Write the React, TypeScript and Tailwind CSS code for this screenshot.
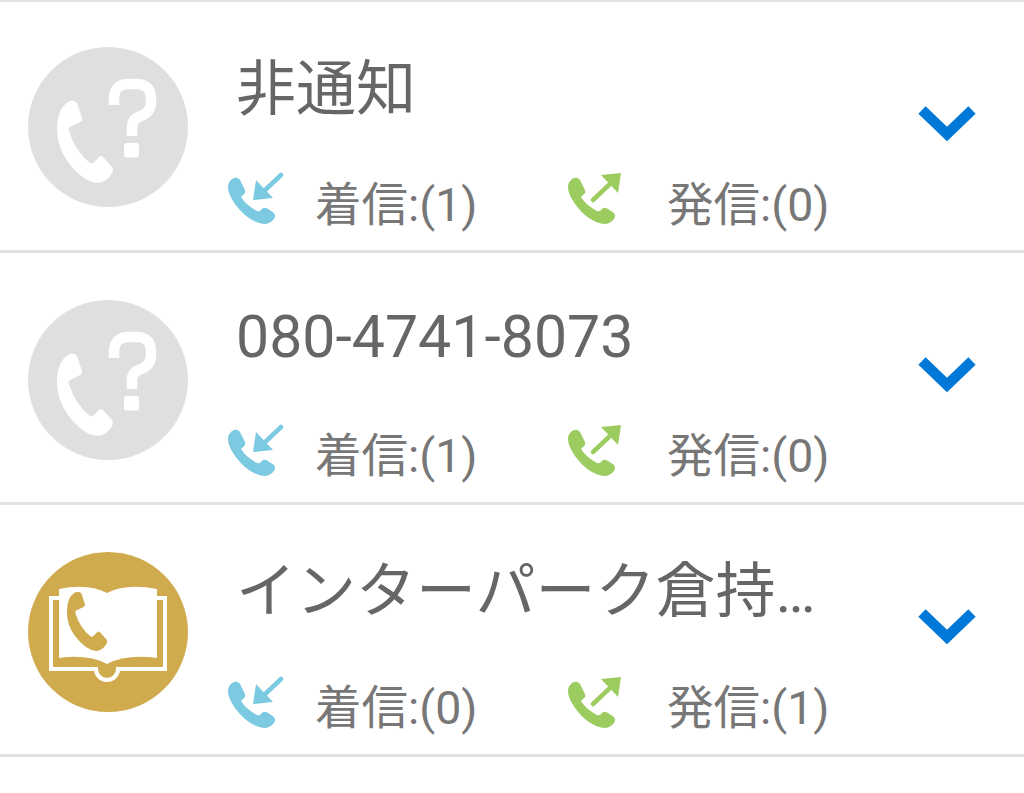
const PHONE = "M40 55 Q46 52 49 56 L54 71 Q55 74 52 75 L42 80 Q40 81 41 84 Q47 104 62 116 Q64 117 66 115 L71 110 Q73 108 75 110 L84 120 Q86 123 84 126 Q79 135 70 136 Q55 135 40 115 Q29 100 29 82 Q29 62 40 55Z";
const SMALL = "M4 9 Q9 6 12 10 L17 20 Q18 23 15 25 L13 27 Q18 35 29 41 Q31 42 33 40 L35 38 Q37 37 40 39 L46 43 Q48 46 46 49 Q42 54 36 54 Q20 52 7 34 Q0 24 0 17 Q0 12 4 9Z";

function Unknown() {
  return (
    <svg width="160" height="160" viewBox="0 0 160 160" className="shrink-0">
      <circle cx="80" cy="80" r="80" fill="#dfdfdf" />
      <path d={PHONE} fill="#fff" />
      <path d="M86 58 V52 Q86 37 101 37 H108 Q123 37 123 52 V55 Q123 65 113 69 Q104 72 104 80 V89" fill="none" stroke="#fff" strokeWidth="10.5" />
      <rect x="96" y="96" width="15" height="14.5" rx="2.5" fill="#fff" />
    </svg>
  );
}

function Book() {
  return (
    <svg width="160" height="160" viewBox="0 0 160 160" className="shrink-0">
      <circle cx="80" cy="80" r="80" fill="#d0ab4e" />
      <path d="M31 46 H23 V117 H68 A11 11 0 0 0 90 117 H137 V46 H129" fill="none" stroke="#fff" strokeWidth="4" />
      <path d="M31 37 Q60 31 79 41 Q98 31 129 37 V106 Q98 102 79 112 Q60 102 31 106Z" fill="#fff" />
      <path d={PHONE} fill="#d0ab4e" transform="translate(18 1) scale(0.72)" />
    </svg>
  );
}

function CallIn() {
  return (
    <svg width="56" height="56" viewBox="0 0 56 56" className="shrink-0">
      <path d={SMALL} fill="#7bcae1" />
      <path d="M53 5 L33 24" stroke="#7bcae1" strokeWidth="4.5" strokeLinecap="round" />
      <path d="M25 30 L28 10 L45 28Z" fill="#7bcae1" />
    </svg>
  );
}

function CallOut() {
  return (
    <svg width="56" height="56" viewBox="0 0 56 56" className="shrink-0">
      <path d={SMALL} fill="#9ccc5f" />
      <path d="M25 30 L43 13" stroke="#9ccc5f" strokeWidth="4.5" strokeLinecap="round" />
      <path d="M53 3 L33 5 L50 23Z" fill="#9ccc5f" />
    </svg>
  );
}

function Chevron() {
  return (
    <svg width="58" height="36" viewBox="0 0 58 36" className="shrink-0">
      <path d="M4 4 L29 28 L54 4" fill="none" stroke="#0078d7" strokeWidth="10.5" />
    </svg>
  );
}

const rows = [
  { title: "非通知", inc: 1, out: 0, book: false, h: "h-[251px]", top: "mt-[45px]", fs: "text-[60px]", tt: "mt-[46px]", st: "mt-[38px]", sub: "mt-[14px]" },
  { title: "080-4741-8073", inc: 1, out: 0, book: false, h: "h-[252px]", top: "mt-[47px]", fs: "text-[59px]", tt: "mt-[42px]", st: "mt-[43px]", sub: "mt-[12px]" },
  { title: "インターパーク倉持…", inc: 0, out: 1, book: true, h: "h-[252px]", top: "mt-[47px]", fs: "text-[60px]", tt: "mt-[45px]", st: "mt-[40px]", sub: "mt-[12px]" },
];

export default function App() {
  return (
    <div className="w-[1024px] h-[793px] bg-white overflow-hidden border-t-2 border-[#e2e2e2] [font-family:Roboto,'Noto_Sans_CJK_JP',sans-serif]">
      {rows.map((r) => (
        <div key={r.title} className={`${r.h} border-b-[3px] border-[#e2e2e2] flex items-start pl-7`}>
          <div className={r.top}>{r.book ? <Book /> : <Unknown />}</div>
          <div className="ml-10 w-[690px] flex flex-col">
            <div className={`${r.tt} ${r.fs} h-[84px] pl-2 whitespace-nowrap leading-[84px] text-[#666666]`}>{r.title}</div>
            <div className={`${r.st} flex items-center h-[56px]`}>
              <div className="w-[340px] flex items-center">
                <CallIn />
                <span className={`${r.sub} ml-[31px] text-[46.5px] leading-[56px] text-[#777777]`}>着信:({r.inc})</span>
              </div>
              <div className="flex items-center">
                <CallOut />
                <span className={`${r.sub} ml-[43px] text-[46.5px] leading-[56px] text-[#777777]`}>発信:({r.out})</span>
              </div>
            </div>
          </div>
          <div className="mt-[104px]"><Chevron /></div>
        </div>
      ))}
    </div>
  );
}
